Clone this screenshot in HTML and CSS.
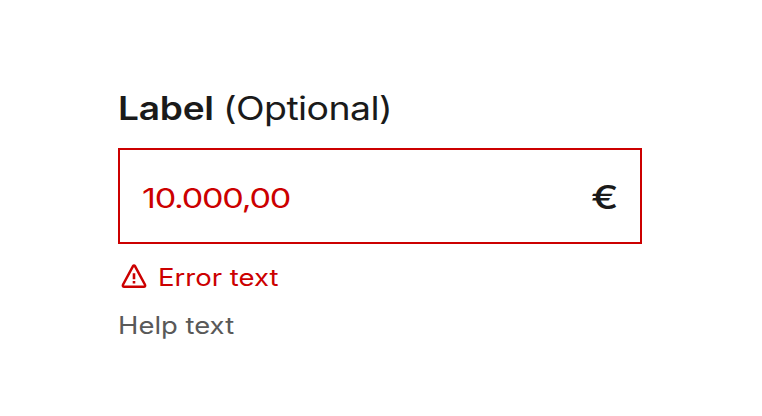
FILE: index.html
```
<!DOCTYPE html>
<html lang="en">
<head>
<meta charset="utf-8">
<title>Currency input</title>
<link rel="stylesheet" href="styles.css">
</head>
<body>
<main class="field">
  <label class="label" for="amount"><span class="name">Label</span><span class="optional">(Optional)</span></label>
  <div class="control" id="amount">
    <span class="value">10.000,00</span>
    <span class="currency">€</span>
  </div>
  <div class="error">
    <svg class="icon" viewBox="0 0 32 32" aria-hidden="true">
      <path class="outline" d="M14.9 6.3 5.1 24.5Q4.2 26.6 6.3 26.7H25.7Q27.8 26.6 26.9 24.5L17.1 6.3Q16 4.7 14.9 6.3Z"/>
      <path class="mark" d="M14.7 13.3h2.6v6h-2.6zM14.7 21h2.6v2.5h-2.6z"/>
    </svg>
    <span class="error-text">Error text</span>
  </div>
  <div class="help"><span class="help-text">Help text</span></div>
</main>
</body>
</html>
```
FILE: styles.css
```
* { box-sizing: border-box; }
body {
  margin: 0;
  background: #fff;
  color: #1a1a1a;
  font-family: Inter, "Liberation Sans", sans-serif;
}
.field { width: 524px; margin: 88px 0 0 118px; }
.label { display: flex; height: 60px; line-height: 42px; font-size: 32px; }
.name, .optional, .value, .error-text, .help-text {
  display: block;
  white-space: nowrap;
  transform-origin: left center;
}
.name { width: 105px; font-weight: 600; letter-spacing: -0.2px; transform: scaleX(1.158); }
.optional { font-weight: 400; letter-spacing: -0.5px; transform: scaleX(1.17); }
.control {
  display: flex;
  align-items: center;
  justify-content: space-between;
  height: 96px;
  padding: 4px 22px 0;
  border: 2px solid #cc0000;
}
.value { margin-top: 1px; color: #cc0000; font-size: 27px; letter-spacing: -1px; transform: scaleX(1.265); }
.currency { margin: -2px -1px 0 0; font-size: 32px; font-weight: 500; transform: scaleX(1.28); transform-origin: right center; }
.error {
  display: flex;
  align-items: center;
  height: 36px;
  margin-top: 15px;
  color: #cc0000;
  font-size: 24px;
}
.icon { width: 32px; height: 32px; margin: -3px 8px 0 0; }
.outline { fill: none; stroke: currentColor; stroke-width: 2.5; stroke-linejoin: round; }
.mark { fill: currentColor; }
.error-text { transform: scaleX(1.147); }
.help { height: 36px; margin-top: 13px; line-height: 36px; color: #595959; font-size: 24px; }
.help-text { font-weight: 400; transform: scaleX(1.143); }
```
